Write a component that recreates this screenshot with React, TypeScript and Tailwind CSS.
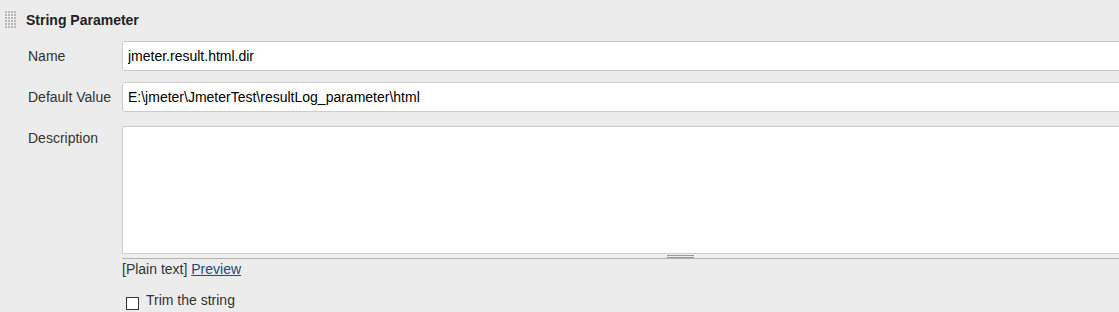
import React from 'react';

const GripIcon: React.FC = () => {
  const dots = [];
  for (let r = 0; r < 6; r++) {
    for (let c = 0; c < 4; c++) {
      dots.push(<rect key={`${r}-${c}`} x={c * 3} y={r * 3} width={2} height={2} fill="#b8b8b8" />);
    }
  }
  return (
    <svg width="12" height="18" viewBox="0 0 12 18">
      {dots}
    </svg>
  );
};

const App: React.FC = () => {
  return (
    <div className="w-[1119px] h-[312px] bg-[#ececec] overflow-hidden text-[14px] text-[#333] font-['Liberation_Sans',Arial,sans-serif]">
      <div className="h-[40px] flex items-center pl-[5px]">
        <GripIcon />
        <span className="ml-[9px] font-bold text-[#222]">String Parameter</span>
      </div>

      <div className="grid grid-cols-[122px_1fr]">
        <div className="pl-[28px] flex items-center mt-[1px]">Name</div>
        <div className="mt-[1px]">
          <input
            type="text"
            readOnly
            value="jmeter.result.html.dir"
            className="w-[1100px] h-[30px] px-[5px] bg-white border border-[#ccc] rounded-[3px] text-[14px] text-black outline-none"
          />
        </div>

        <div className="pl-[28px] flex items-center mt-[11px]">Default Value</div>
        <div className="mt-[11px]">
          <input
            type="text"
            readOnly
            value="E:\jmeter\JmeterTest\resultLog_parameter\html"
            className="w-[1100px] h-[30px] px-[5px] bg-white border border-[#ccc] rounded-[3px] text-[14px] text-black outline-none"
          />
        </div>

        <div className="pl-[28px] mt-[14px] pt-[4px] leading-[16px]">Description</div>
        <div className="mt-[14px]">
          <div className="w-[1116px]">
            <div className="h-[128px] bg-white border border-[#ccc] rounded-t-[3px]" />
            <div className="h-[5px] bg-[#eee] border-b border-[#b4b4aa] flex justify-center">
              <div className="w-[27px] mt-[1px] flex flex-col gap-[1px]">
                <div className="h-[1px] bg-[#999]" />
                <div className="h-[1px] bg-[#999]" />
              </div>
            </div>
          </div>
          <div className="mt-[2px] leading-[16px]">
            [Plain text] <a href="#" className="text-[#204a87] underline">Preview</a>
          </div>
          <label className="mt-[15px] ml-[4px] flex items-start leading-[16px]">
            <span className="mt-[5px] w-[13px] h-[13px] bg-white border border-[#333] shrink-0" />
            <span className="ml-[7px]">Trim the string</span>
          </label>
        </div>
      </div>
    </div>
  );
};

export default App;
